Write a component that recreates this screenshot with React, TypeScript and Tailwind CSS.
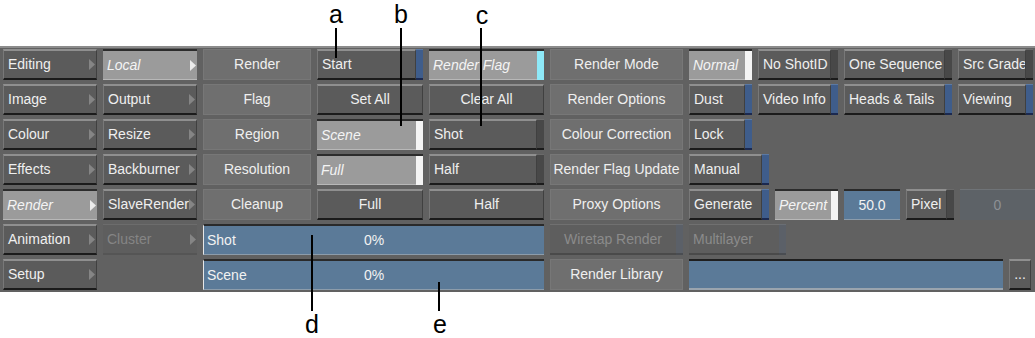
import type { ReactNode } from "react";

type Strip = "blue" | "dark" | "white" | "cyan" | "dim" | "none";

const stripClass: Record<Strip, string> = {
  blue: "w-[7px] shrink-0 bg-[#3f5d8b] border-t border-t-[#5b79a3] border-b-2 border-b-[#1b2950]",
  dark: "w-[7px] shrink-0 bg-[#484848] border-t border-t-[#6a6a6a] border-b-2 border-b-[#1b1b1b]",
  white: "w-[7px] shrink-0 bg-[#f4f4f4] border-t-2 border-t-[#2c2c2c]",
  cyan: "w-[7px] shrink-0 bg-[#8ee9f8] border-t-2 border-t-[#2c2c2c]",
  dim: "w-[7px] shrink-0 bg-[#5b6068] border-t border-t-[#6a6e74] border-b-2 border-b-[#4a4d52]",
  none: "hidden",
};

function Arrow({ light }: { light?: boolean }) {
  return (
    <svg width="6" height="11" viewBox="0 0 6 11" className="mr-[1px] shrink-0">
      <polygon points="0,0 6,5.5 0,11" fill={light ? "#ececec" : "#858585"} />
    </svg>
  );
}

type BtnProps = {
  w: string;
  label?: string;
  kind?: "raised" | "selected" | "flat" | "disabled";
  strip?: Strip;
  center?: boolean;
  arrow?: boolean;
};

function Btn({ w, label, kind = "raised", strip = "none", center, arrow }: BtnProps) {
  const body =
    kind === "selected"
      ? "bg-[#9b9b9b] border-t-2 border-t-[#2c2c2c] border-b border-b-[#b8b8b8] italic text-[#f4f4f4]"
      : kind === "flat"
        ? "bg-[#6f6f6f] border border-[#777777] text-[#efefef]"
        : kind === "disabled"
          ? "bg-[#5e5e5e] border-t border-t-[#707070] border-b-2 border-b-[#4a4a4a] text-[#8b8b8b]"
          : "bg-[#5b5b5b] border-t-2 border-t-[#8f8f8f] border-l border-l-[#787878] border-b-2 border-b-[#1b1b1b] border-r border-r-[#404040] text-[#efefef]";
  return (
    <div className={`flex h-full shrink-0 ${w}`}>
      <div
        className={`flex min-w-0 flex-1 items-center overflow-hidden whitespace-nowrap ${
          center ? "justify-center" : "justify-between pl-[4px]"
        } ${body}`}
      >
        <span>{label}</span>
        {arrow && <Arrow light={kind === "selected"} />}
      </div>
      <div className={stripClass[strip]} />
    </div>
  );
}

function Bar({ label }: { label: string }) {
  return (
    <div className="grid h-full w-[341px] shrink-0 grid-cols-[1fr_auto_1fr] items-center border-t-2 border-l border-t-[#2a2a2a] border-l-[#e6e6e6] border-b border-b-[#8c9cab] bg-[#5b7a98] text-[#f2f2f2]">
      <span className="pl-[3px]">{label}</span>
      <span>0%</span>
      <span />
    </div>
  );
}

function Row({ children }: { children: ReactNode }) {
  return <div className="flex h-[31px] gap-[6px] pl-[3px]">{children}</div>;
}

function Callout({ ch, x, y }: { ch: string; x: string; y: string }) {
  return (
    <span className={`absolute ${x} ${y} -translate-x-1/2 text-[25px] leading-[28px] text-black`}>
      {ch}
    </span>
  );
}

export default function App() {
  return (
    <div className="relative h-[338px] w-[1035px] overflow-hidden bg-white font-['Liberation_Sans',Arial,sans-serif] text-[14px]">
      <div className="mt-[46px] flex h-[246px] flex-col gap-[4px] border-t-2 border-[#8c8c8c] bg-[#616161] pt-[1px]">
        <Row>
          <Btn w="w-[94px]" label="Editing" arrow />
          <Btn w="w-[94px]" label="Local" kind="selected" arrow />
          <Btn w="w-[108px]" label="Render" kind="flat" center />
          <Btn w="w-[106px]" label="Start" strip="blue" />
          <Btn w="w-[115px]" label="Render Flag" kind="selected" strip="cyan" />
          <Btn w="w-[133px]" label="Render Mode" kind="flat" center />
          <Btn w="w-[63px]" label="Normal" kind="selected" strip="white" />
          <Btn w="w-[80px]" label="No ShotID" strip="dark" />
          <Btn w="w-[108px]" label="One Sequence" strip="dark" />
          <Btn w="w-[75px]" label="Src Grade" strip="dark" />
        </Row>
        <Row>
          <Btn w="w-[94px]" label="Image" arrow />
          <Btn w="w-[94px]" label="Output" arrow />
          <Btn w="w-[108px]" label="Flag" kind="flat" center />
          <Btn w="w-[106px]" label="Set All" center />
          <Btn w="w-[115px]" label="Clear All" center />
          <Btn w="w-[133px]" label="Render Options" kind="flat" center />
          <Btn w="w-[63px]" label="Dust" strip="blue" />
          <Btn w="w-[80px]" label="Video Info" strip="blue" />
          <Btn w="w-[108px]" label="Heads & Tails" strip="blue" />
          <Btn w="w-[75px]" label="Viewing" strip="blue" />
        </Row>
        <Row>
          <Btn w="w-[94px]" label="Colour" arrow />
          <Btn w="w-[94px]" label="Resize" arrow />
          <Btn w="w-[108px]" label="Region" kind="flat" center />
          <Btn w="w-[106px]" label="Scene" kind="selected" strip="white" />
          <Btn w="w-[115px]" label="Shot" strip="dark" />
          <Btn w="w-[133px]" label="Colour Correction" kind="flat" center />
          <Btn w="w-[63px]" label="Lock" strip="blue" />
        </Row>
        <Row>
          <Btn w="w-[94px]" label="Effects" arrow />
          <Btn w="w-[94px]" label="Backburner" arrow />
          <Btn w="w-[108px]" label="Resolution" kind="flat" center />
          <Btn w="w-[106px]" label="Full" kind="selected" strip="white" />
          <Btn w="w-[115px]" label="Half" strip="dark" />
          <Btn w="w-[133px]" label="Render Flag Update" kind="flat" center />
          <Btn w="w-[80px]" label="Manual" strip="blue" />
        </Row>
        <Row>
          <Btn w="w-[94px]" label="Render" kind="selected" arrow />
          <Btn w="w-[94px]" label="SlaveRender" arrow />
          <Btn w="w-[108px]" label="Cleanup" kind="flat" center />
          <Btn w="w-[106px]" label="Full" center />
          <Btn w="w-[115px]" label="Half" center />
          <Btn w="w-[133px]" label="Proxy Options" kind="flat" center />
          <Btn w="w-[80px]" label="Generate" strip="blue" />
          <Btn w="w-[63px]" label="Percent" kind="selected" strip="white" />
          <div className="flex h-full w-[56px] shrink-0 items-center justify-center border-t-2 border-t-[#2a2a2a] border-b border-b-[#8c9cab] bg-[#5b7a98] text-[#f2f2f2]">
            50.0
          </div>
          <Btn w="w-[48px]" label="Pixel" strip="dark" />
          <div className="flex h-full w-[75px] shrink-0 items-center justify-center border-t border-t-[#6f7377] bg-[#5d6267] text-[#8d9195]">
            0
          </div>
        </Row>
        <Row>
          <Btn w="w-[94px]" label="Animation" arrow />
          <div className="flex h-full w-[94px] shrink-0 items-center justify-between border-t border-t-[#6c6c6c] border-b-2 border-b-[#555555] bg-[#5e5e5e] pl-[4px] text-[#858585]">
            <span>Cluster</span>
            <Arrow />
          </div>
          <Bar label="Shot" />
          <Btn w="w-[133px]" label="Wiretap Render" kind="disabled" strip="dim" center />
          <Btn w="w-[97px]" label="Multilayer" kind="disabled" strip="dim" />
        </Row>
        <Row>
          <Btn w="w-[94px]" label="Setup" arrow />
          <div className="w-[94px] shrink-0" />
          <Bar label="Scene" />
          <Btn w="w-[133px]" label="Render Library" kind="flat" center />
          <div className="h-full w-[314px] shrink-0 border-t-2 border-t-[#1f1f1f] border-b-2 border-b-[#9aa4ae] bg-[#5b7a98]" />
          <Btn w="w-[22px]" label="..." center />
        </Row>
      </div>

      <Callout ch="a" x="left-[336px]" y="top-[0px]" />
      <Callout ch="b" x="left-[401px]" y="top-[0px]" />
      <Callout ch="c" x="left-[482px]" y="top-[1px]" />
      <Callout ch="d" x="left-[312px]" y="top-[310px]" />
      <Callout ch="e" x="left-[440px]" y="top-[310px]" />
      <div className="absolute left-[335px] top-[28px] h-[30px] w-[2px] bg-black" />
      <div className="absolute left-[400px] top-[28px] h-[98px] w-[2px] bg-black" />
      <div className="absolute left-[480px] top-[28px] h-[98px] w-[2px] bg-black" />
      <div className="absolute left-[311px] top-[235px] h-[76px] w-[2px] bg-black" />
      <div className="absolute left-[438px] top-[282px] h-[29px] w-[2px] bg-black" />
    </div>
  );
}
